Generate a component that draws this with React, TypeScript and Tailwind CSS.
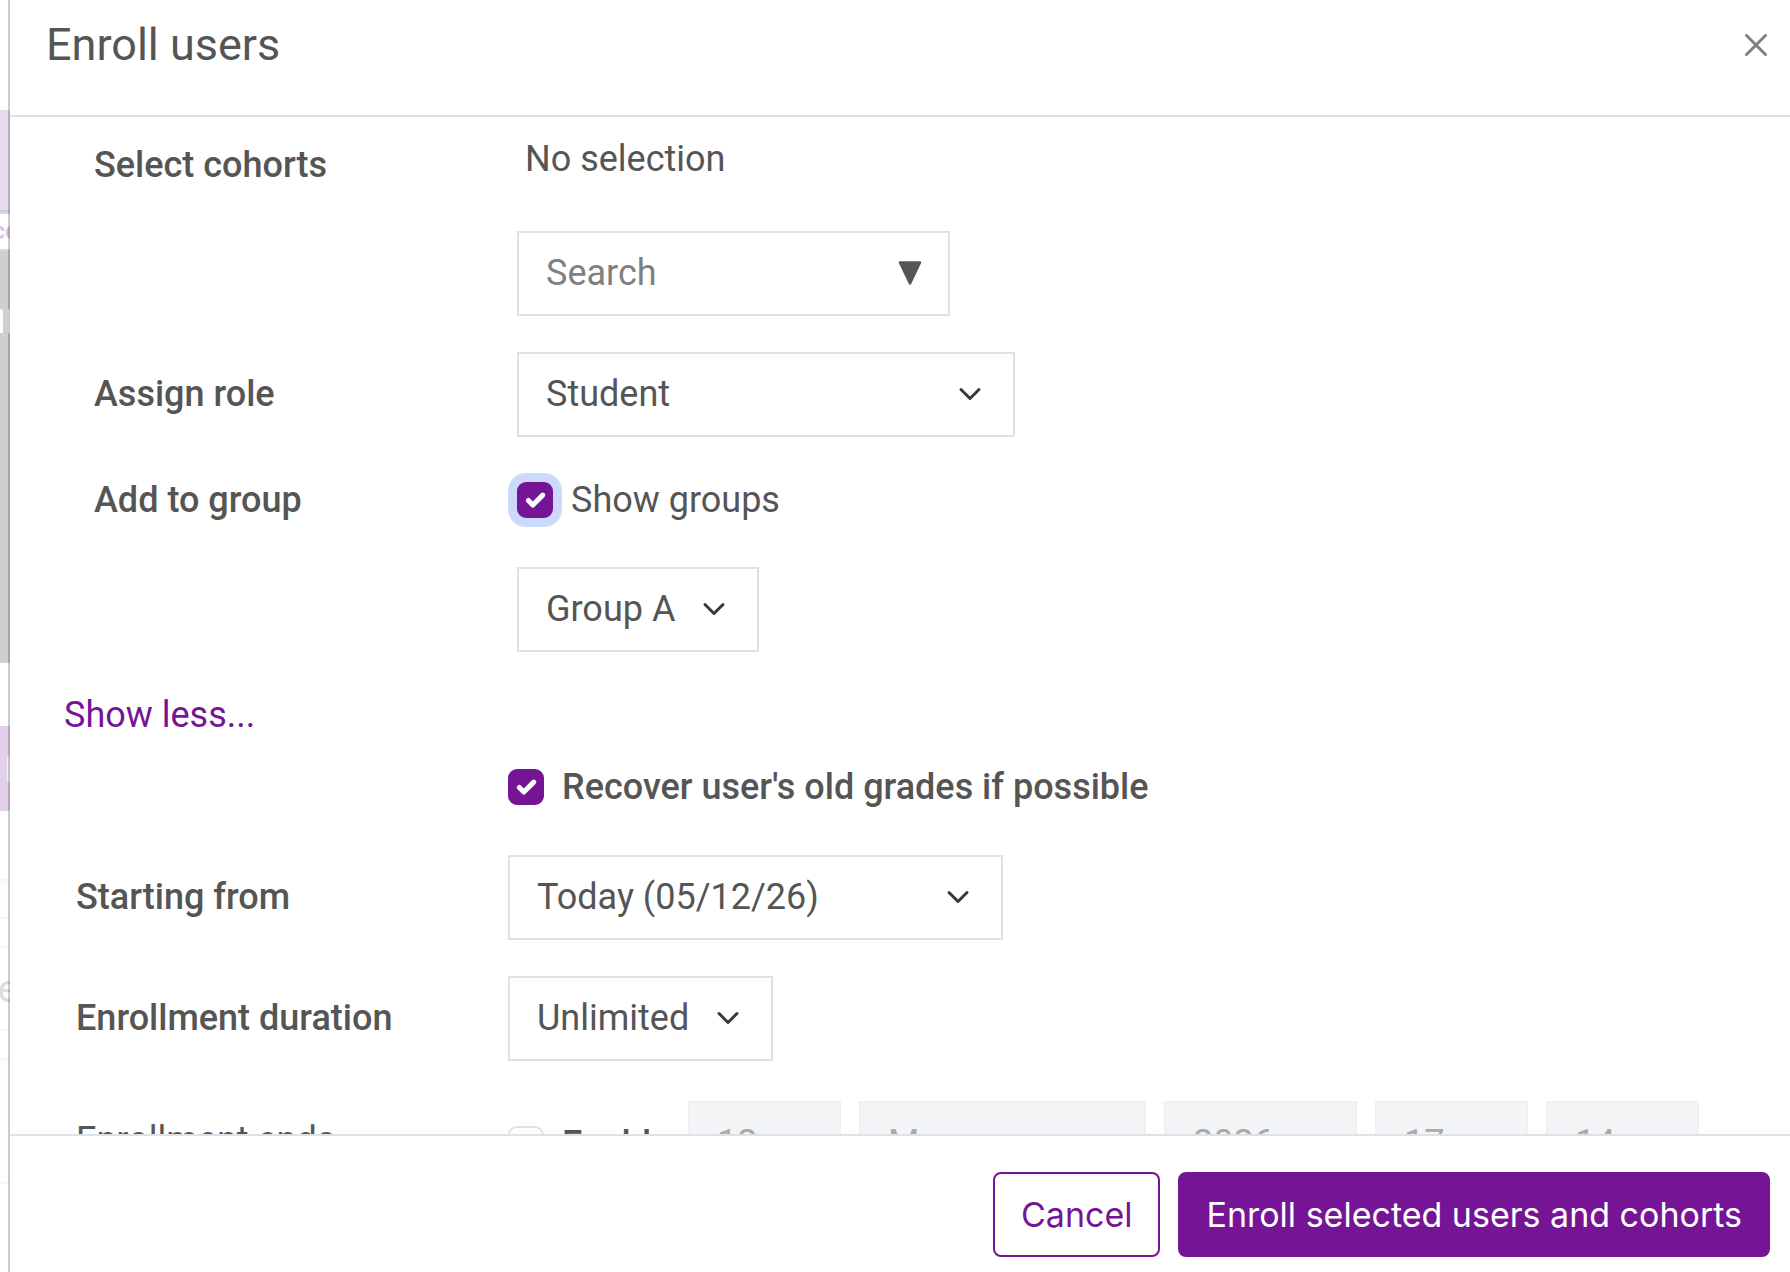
import { useState } from 'react'
import type { ReactNode } from 'react'
import clsx from 'clsx'

type SelectProps = {
  id: string
  label?: string
  options: string[]
  width: string
  disabled?: boolean
}

function Select({ id, label, options, width, disabled }: SelectProps) {
  return (
    <div className={clsx('relative shrink-0', width, disabled && 'opacity-50')}>
      <select
        id={id}
        aria-label={label}
        disabled={disabled}
        className={clsx(
          'block h-[85px] w-full appearance-none border-2 border-[#dee2e6] pb-px pl-[27px] text-[36px] leading-[54px] text-[#555555] opacity-100',
          disabled ? 'bg-[#e9ebee]' : 'bg-white'
        )}
      >
        {options.map(option => (
          <option key={option}>{option}</option>
        ))}
      </select>
      <svg viewBox="0 0 16 16" className="pointer-events-none absolute top-[30px] right-[33px] size-6" fill="none">
        <path d="m2 5 6 6 6-6" stroke="#343a40" strokeWidth="2" strokeLinecap="round" strokeLinejoin="round" />
      </svg>
    </div>
  )
}

type CheckboxProps = {
  id: string
  checked: boolean
  onChange: (checked: boolean) => void
  ring?: boolean
}

function Checkbox({ id, checked, onChange, ring }: CheckboxProps) {
  return (
    <span className="relative size-9 shrink-0">
      <input
        id={id}
        type="checkbox"
        checked={checked}
        onChange={e => onChange(e.target.checked)}
        className={clsx(
          'block size-9 appearance-none rounded-[9px] border-2',
          checked ? 'border-[#761496] bg-[#761496]' : 'border-[#dee2e6] bg-white',
          ring && 'ring-9 ring-[#cbd9fd]'
        )}
      />
      {checked && (
        <svg viewBox="0 0 20 20" className="pointer-events-none absolute inset-0 size-9" fill="none">
          <path d="m6.3 10.3 2.500 2.500 5.500-5.500" stroke="#fff" strokeWidth="2.800" strokeLinecap="round" strokeLinejoin="round" />
        </svg>
      )}
    </span>
  )
}

function Row({ label, children, wide }: { label?: ReactNode; children: ReactNode; wide?: boolean }) {
  return (
    <div
      className={clsx(
        'grid items-center',
        wide ? 'grid-cols-[432px_1fr] pl-[66px]' : 'grid-cols-[423px_1fr] pl-[84px]'
      )}
    >
      <div>{label}</div>
      {children}
    </div>
  )
}

// Sliver of the dimmed course page that stays visible beside the dialog
function PageEdge() {
  return (
    <div aria-hidden="true" className="relative flex w-[10px] shrink-0 flex-col overflow-hidden">
      <div className="h-[110px]" />
      <div className="h-[100px] bg-[#e8daee]" />
      <div className="h-[2px] bg-[#d0cfcf]" />
      <div className="h-[2px] bg-[#e2cfea]" />
      <div className="-mr-2 flex h-[35px] items-center justify-end pb-[2px] text-[24px] font-bold text-[#dcc5e6]">ce</div>
      <div className="h-[2px] bg-[#e2cfea]" />
      <div className="h-[58px] bg-[#d0cfcf]" />
      <div className="flex h-6 bg-[#d0cfcf]">
        <div className="w-[3px] rounded-tr-[3px] bg-white" />
        <div className="ml-[5px] w-[2px] bg-white" />
      </div>
      <div className="h-[330px] bg-[#d0cfcf]" />
      <div className="h-[63px]" />
      <div className="flex h-[85px] items-center justify-end bg-[#e2cfea]">
        <div className="h-[26px] w-[3px] bg-[#f6f0f9]" />
      </div>
      <div className="h-[68px]" />
      <div className="h-10 border-y-2 border-[#f7f7f7] bg-[#fbfefd]" />
      <div className="h-[27px]" />
      <div className="-mr-2 flex h-[85px] items-center justify-end border-y-2 border-[#f7f7f7] text-[38px] text-[#dddddd]">e</div>
      <div className="h-[27px]" />
      <div className="h-[126px] border-y-2 border-[#f7f7f7] bg-[#fbfefd]" />
      <div className="absolute inset-y-0 right-0 w-[2px] bg-black/20" />
    </div>
  )
}

const DATE_PARTS = [
  { id: 'end-day', label: 'Day', value: '12', width: 'w-[153px]' },
  { id: 'end-month', label: 'Month', value: 'May', width: 'w-[287px]' },
  { id: 'end-year', label: 'Year', value: '2026', width: 'w-[193px]' },
  { id: 'end-hour', label: 'Hour', value: '17', width: 'w-[153px]' },
  { id: 'end-minute', label: 'Minute', value: '14', width: 'w-[153px]' },
]

export default function App() {
  const [showGroups, setShowGroups] = useState(true)
  const [recover, setRecover] = useState(true)
  const [endEnabled, setEndEnabled] = useState(false)

  return (
    <div className="flex h-screen overflow-hidden bg-white font-[Roboto,sans-serif] text-[36px] leading-[54px] text-[#555555]">
      <PageEdge />
      <div role="dialog" aria-labelledby="dialog-title" className="flex min-w-0 flex-1 flex-col">
        <header className="flex items-start justify-between border-b-2 border-[#dee2e6] pt-[18px] pr-[23px] pb-[43px] pl-9">
          <h1 id="dialog-title" className="text-[45px] leading-[54px]">Enroll users</h1>
          <button type="button" aria-label="Close" className="mt-4">
            <svg viewBox="0 0 22 22" className="size-[22px]" fill="none">
              <path d="M1.5 1.5 20.5 20.5M20.5 1.5 1.5 20.5" stroke="#808080" strokeWidth="3" strokeLinecap="round" />
            </svg>
          </button>
        </header>

        <form className="min-h-0 flex-1 overflow-hidden pt-[15px]">
          <div className="flex flex-col gap-9">
            <div className="grid grid-cols-[423px_1fr] items-start pl-[84px]">
              <label htmlFor="cohorts" className="pt-[6px] font-medium">Select cohorts</label>
              <div>
                <p className="pl-2">No selection</p>
                <div className="relative mt-[45px] w-[433px]">
                  <input
                    id="cohorts"
                    type="text"
                    placeholder="Search"
                    className="block h-[85px] w-full border-2 border-[#dee2e6] bg-white px-[27px] pb-px placeholder:text-[#808080]"
                  />
                  <svg viewBox="0 0 24 24" className="pointer-events-none absolute top-[30px] right-7 size-6">
                    <path d="M2 1.500h20L12 22.500Z" fill="#555555" stroke="#555555" strokeWidth="2.500" strokeLinejoin="round" />
                  </svg>
                </div>
              </div>
            </div>

            <Row label={<label htmlFor="role" className="block pb-px font-medium">Assign role</label>}>
              <Select id="role" options={['Student', 'Teacher', 'Non-editing teacher']} width="w-[498px]" />
            </Row>

            <div>
              <Row label={<span className="font-medium">Add to group</span>}>
                <div className="flex items-center gap-[18px]">
                  <Checkbox id="show-groups" checked={showGroups} onChange={setShowGroups} ring />
                  <label htmlFor="show-groups">Show groups</label>
                </div>
              </Row>
              {showGroups && (
                <div className="mt-10">
                  <Row>
                    <Select id="group" label="Group" options={['Group A']} width="w-[242px]" />
                  </Row>
                </div>
              )}
            </div>
          </div>

          <a href="#" className="mt-9 ml-[54px] inline-block align-top text-[#761496]">Show less...</a>

          <div className="mt-[18px]">
            <Row wide>
              <div className="flex items-center gap-[18px]">
                <Checkbox id="recover" checked={recover} onChange={setRecover} />
                <label htmlFor="recover" className="font-medium">Recover user's old grades if possible</label>
              </div>
            </Row>
          </div>

          <div className="mt-[41px] flex flex-col gap-9">
            <Row wide label={<label htmlFor="start" className="block pb-px font-medium">Starting from</label>}>
              <Select id="start" options={['Today (05/12/26)', 'Course start']} width="w-[495px]" />
            </Row>
            <Row wide label={<label htmlFor="duration" className="block pb-px font-medium">Enrollment duration</label>}>
              <Select id="duration" options={['Unlimited']} width="w-[265px]" />
            </Row>
          </div>

          <div className="mt-10">
            <Row wide label={<span className="block pb-2">Enrollment ends</span>}>
              <div className="flex items-center gap-[18px]">
                <div className="flex w-[162px] items-center gap-[18px]">
                  <Checkbox id="end-enabled" checked={endEnabled} onChange={setEndEnabled} />
                  <label htmlFor="end-enabled" className="font-medium">Enable</label>
                </div>
                {DATE_PARTS.map(part => (
                  <Select
                    key={part.id}
                    id={part.id}
                    label={part.label}
                    options={[part.value]}
                    width={part.width}
                    disabled={!endEnabled}
                  />
                ))}
              </div>
            </Row>
          </div>
        </form>

        <footer className="flex justify-end gap-[18px] border-t-2 border-[#dee2e6] pt-9 pr-5 pb-[15px] font-[Inter,sans-serif] text-[34px]">
          <button type="button" className="h-[85px] rounded-lg border-2 border-[#761496] px-[26px] text-[#761496]">
            Cancel
          </button>
          <button type="button" className="h-[85px] rounded-lg border-2 border-[#761496] bg-[#761496] px-[26px] text-white">
            Enroll selected users and cohorts
          </button>
        </footer>
      </div>
    </div>
  )
}
